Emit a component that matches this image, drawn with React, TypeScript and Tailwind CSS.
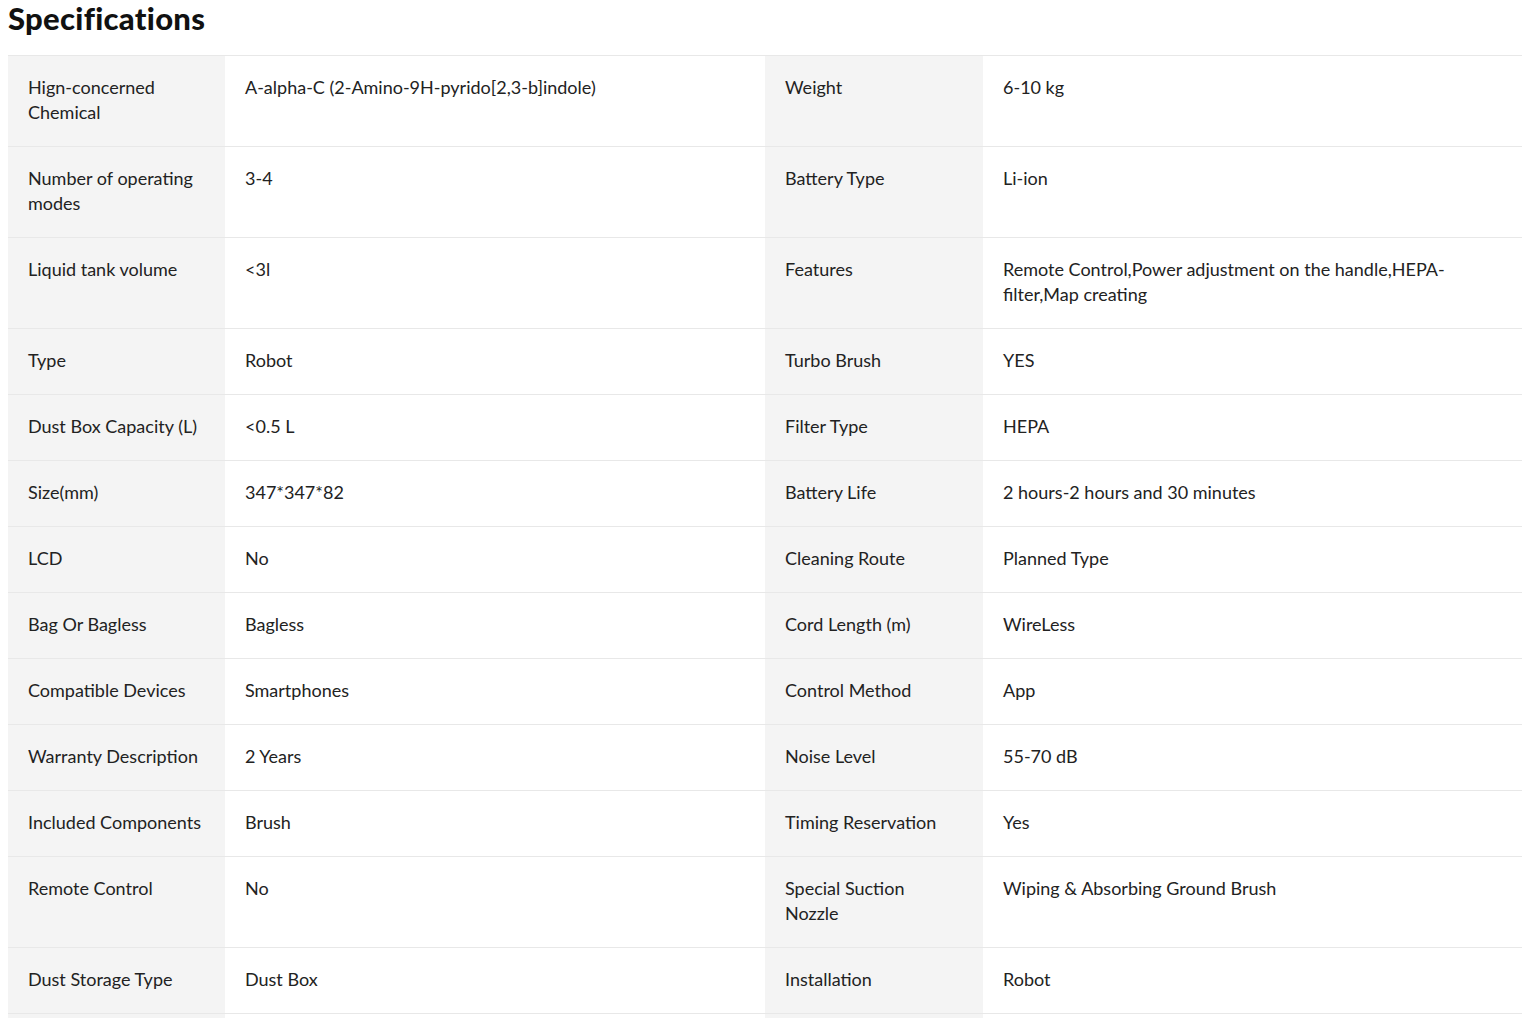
import React from 'react';

type Spec = [string, string, string, string];

const specs: Spec[] = [
  ['Hign-concerned Chemical', 'A-alpha-C (2-Amino-9H-pyrido[2,3-b]indole)', 'Weight', '6-10 kg'],
  ['Number of operating modes', '3-4', 'Battery Type', 'Li-ion'],
  ['Liquid tank volume', '<3l', 'Features', 'Remote Control,Power adjustment on the handle,HEPA-filter,Map creating'],
  ['Type', 'Robot', 'Turbo Brush', 'YES'],
  ['Dust Box Capacity (L)', '<0.5 L', 'Filter Type', 'HEPA'],
  ['Size(mm)', '347*347*82', 'Battery Life', '2 hours-2 hours and 30 minutes'],
  ['LCD', 'No', 'Cleaning Route', 'Planned Type'],
  ['Bag Or Bagless', 'Bagless', 'Cord Length (m)', 'WireLess'],
  ['Compatible Devices', 'Smartphones', 'Control Method', 'App'],
  ['Warranty Description', '2 Years', 'Noise Level', '55-70 dB'],
  ['Included Components', 'Brush', 'Timing Reservation', 'Yes'],
  ['Remote Control', 'No', 'Special Suction Nozzle', 'Wiping & Absorbing Ground Brush'],
  ['Dust Storage Type', 'Dust Box', 'Installation', 'Robot'],
  ['\u00a0', '\u00a0', '\u00a0', '\u00a0'],
];

export default function App() {
  return (
    <div className="h-[1018px] overflow-hidden bg-white px-2 font-['Lato',sans-serif] text-[#222]">
      <h2 className="w-[1514px] text-[31px] leading-[36px] font-black tracking-[0.3px] text-[#111] mb-[19px]">
        Specifications
      </h2>
      <table className="w-[1514px] border-collapse border-t border-[#e8e8e8] table-fixed text-[18px] leading-[25px]">
        <colgroup>
          <col className="w-[217px]" />
          <col className="w-[540px]" />
          <col className="w-[218px]" />
          <col className="w-[539px]" />
        </colgroup>
        <tbody>
          {specs.map((row, i) => (
            <tr key={i} className="border-b border-[#e8e8e8]">
              <td className="bg-[#f4f4f4] pl-5 pr-4 pt-[19px] pb-[21px] align-top">{row[0]}</td>
              <td className="px-5 pt-[19px] pb-[21px] align-top">{row[1]}</td>
              <td className="bg-[#f4f4f4] pl-5 pr-7 pt-[19px] pb-[21px] align-top">{row[2]}</td>
              <td className="pl-5 pr-[70px] pt-[19px] pb-[21px] align-top">{row[3]}</td>
            </tr>
          ))}
        </tbody>
      </table>
    </div>
  );
}
